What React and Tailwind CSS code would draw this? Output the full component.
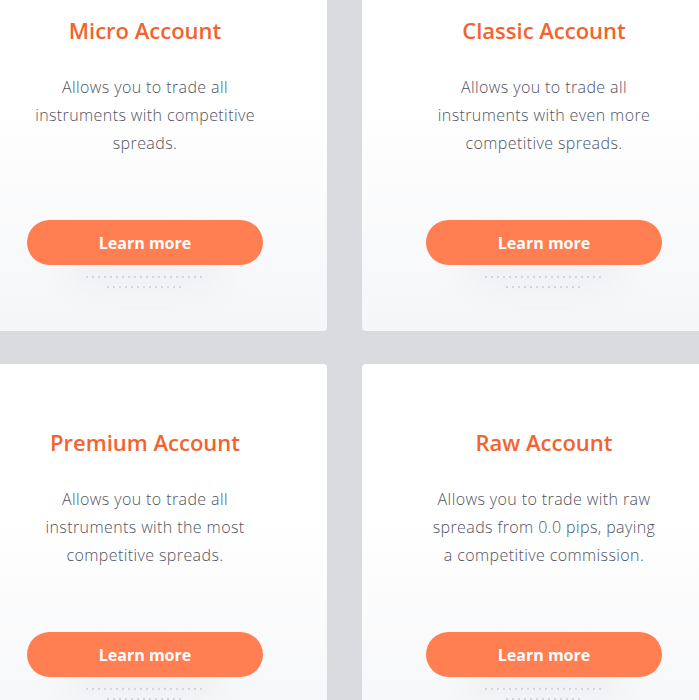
import React from "react";

const accounts = [
  {
    title: "Micro Account",
    lines: ["Allows you to trade all", "instruments with competitive", "spreads."],
  },
  {
    title: "Classic Account",
    lines: ["Allows you to trade all", "instruments with even more", "competitive spreads."],
  },
  {
    title: "Premium Account",
    lines: ["Allows you to trade all", "instruments with the most", "competitive spreads."],
  },
  {
    title: "Raw Account",
    lines: ["Allows you to trade with raw", "spreads from 0.0 pips, paying", "a competitive commission."],
  },
];

function AccountCard({ title, lines }) {
  return (
    <div className="flex h-[379px] flex-col items-center rounded-[4px] bg-gradient-to-b from-white from-40% to-[#f5f6f8] pt-[63px]">
      <h3 className="text-[22px] font-semibold leading-[30px] text-[#f4632d]">
        {title}
      </h3>
      <p className="mt-[28px] text-center text-[16px] font-light leading-[28px] tracking-[0.4px] text-[#4f5463]">
        {lines.map((l, i) => (
          <span key={i} className="block">
            {l}
          </span>
        ))}
      </p>
      <div className="relative mt-[63px] flex flex-col items-center">
        <div className="absolute left-[40px] right-[40px] top-[20px] h-[50px] rounded-full bg-[#eef0f3] blur-[14px]" />
        <button className="relative h-[45px] w-[236px] rounded-full bg-[#ff7f52] text-[16px] font-bold text-white">
          Learn more
        </button>
        <div className="relative mt-[11px] h-[2px] w-[122px] bg-[radial-gradient(circle,#d3d6dc_0.8px,transparent_1px)] bg-[length:6px_2px]" />
        <div className="relative mt-[8px] h-[2px] w-[80px] bg-[radial-gradient(circle,#d3d6dc_0.8px,transparent_1px)] bg-[length:6px_2px]" />
      </div>
    </div>
  );
}

export default function App() {
  return (
    <div
      className="h-[700px] w-[699px] overflow-hidden bg-[#d9dbdf]"
      style={{ fontFamily: '"Open Sans", "Noto Sans", sans-serif' }}
    >
      <div className="ml-[-37px] mt-[-48px] grid grid-cols-[364px_364px] gap-x-[35px] gap-y-[33px]">
        {accounts.map((a) => (
          <AccountCard key={a.title} {...a} />
        ))}
      </div>
    </div>
  );
}
